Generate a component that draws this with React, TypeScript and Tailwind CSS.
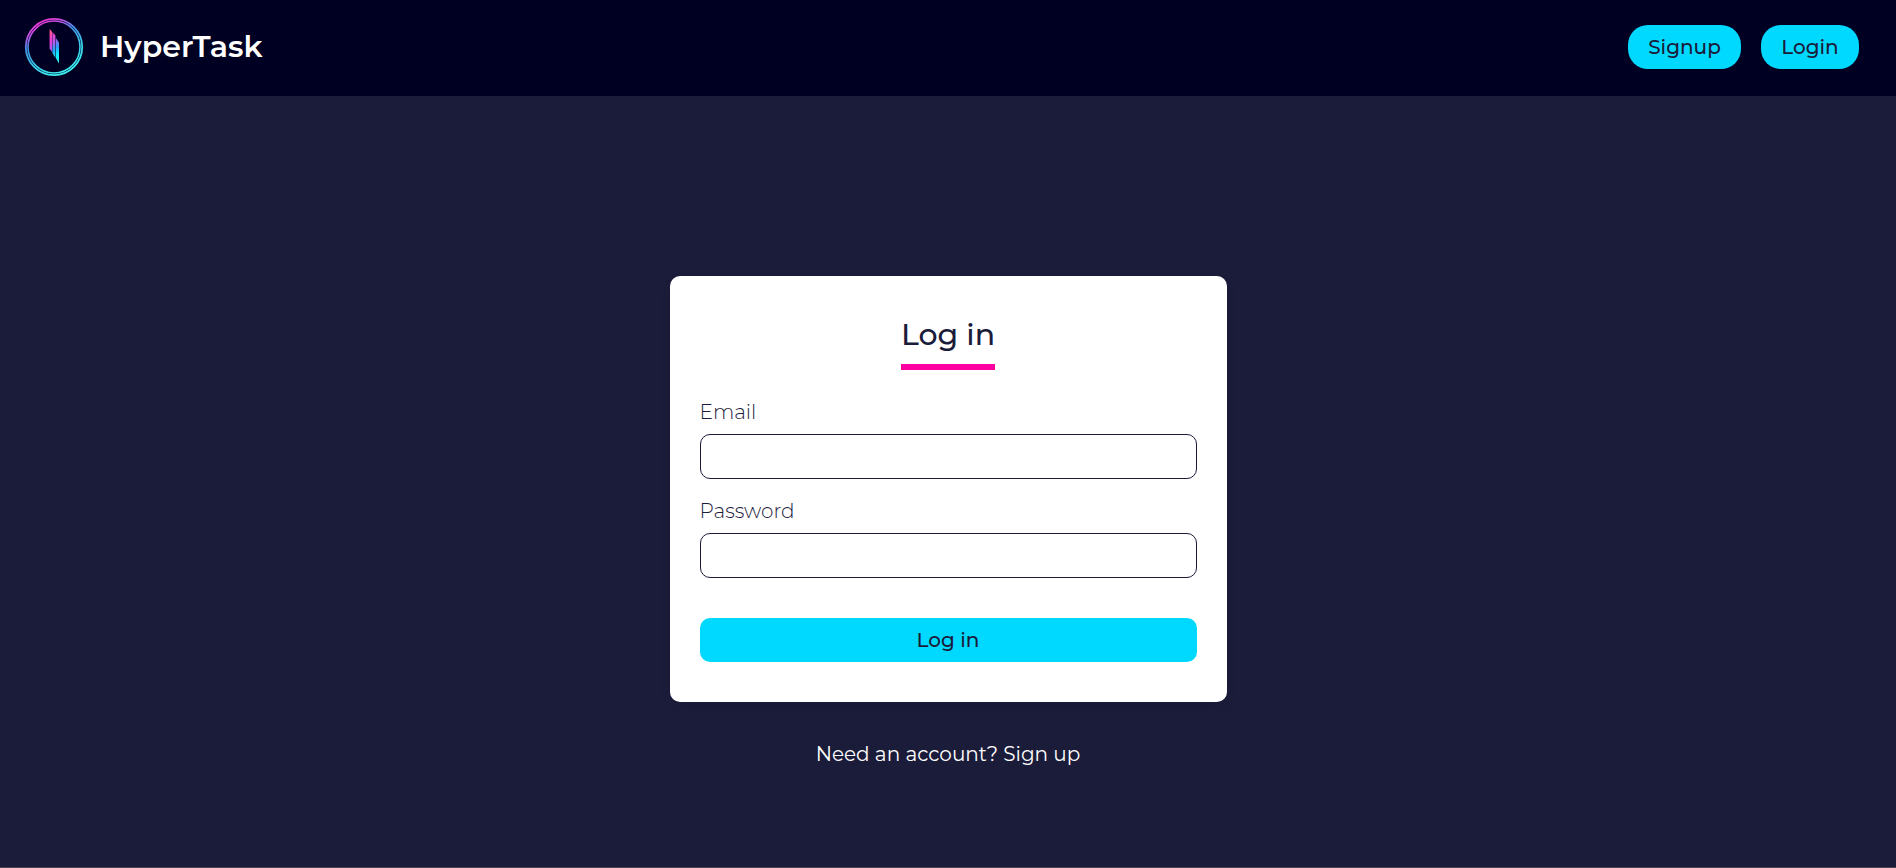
import React from "react";

function Logo() {
  return (
    <svg className="size-[60px]" viewBox="0 0 60 60" fill="none" aria-hidden="true">
      <defs>
        <linearGradient id="ring" x1="14" y1="4" x2="38" y2="56" gradientUnits="userSpaceOnUse">
          <stop offset="0" stopColor="#f433d2" />
          <stop offset="0.16" stopColor="#c050e0" />
          <stop offset="0.36" stopColor="#4292ea" />
          <stop offset="0.7" stopColor="#38cfe8" />
          <stop offset="1" stopColor="#3df0f0" />
        </linearGradient>
        <linearGradient id="barLeft" x1="0" y1="12" x2="0" y2="34" gradientUnits="userSpaceOnUse">
          <stop offset="0" stopColor="#ff5f7c" />
          <stop offset="0.5" stopColor="#f03fd8" />
          <stop offset="1" stopColor="#a35cf0" />
        </linearGradient>
        <linearGradient id="barMiddle" x1="0" y1="15" x2="0" y2="41" gradientUnits="userSpaceOnUse">
          <stop offset="0" stopColor="#ff3fc0" />
          <stop offset="0.4" stopColor="#b25cf0" />
          <stop offset="0.7" stopColor="#28a8f8" />
          <stop offset="1" stopColor="#12e8fa" />
        </linearGradient>
        <linearGradient id="barRight" x1="0" y1="21" x2="0" y2="46" gradientUnits="userSpaceOnUse">
          <stop offset="0" stopColor="#b05cf0" />
          <stop offset="0.35" stopColor="#2d9cf8" />
          <stop offset="0.65" stopColor="#0cecff" />
          <stop offset="1" stopColor="#2af5e6" />
        </linearGradient>
      </defs>
      <circle cx="30" cy="30" r="28.2" stroke="url(#ring)" strokeWidth="1.8" />
      <circle cx="30" cy="30" r="26" stroke="url(#ring)" strokeWidth="1.6" />
      <path d="M25.6 12L28 14.5V35L25.6 31.5Z" fill="url(#barLeft)" />
      <path d="M28.4 15L31.4 18.5V41L28.4 36Z" fill="url(#barMiddle)" />
      <path d="M31.9 21L35 25.5V46.5L31.9 41Z" fill="url(#barRight)" />
    </svg>
  );
}

const navButton =
  "h-11 rounded-[20px] bg-[#00d9ff] text-center text-xl leading-6 font-medium text-[#1b1b3a]";

function Header() {
  return (
    <header className="flex h-24 items-center justify-between bg-[#000022] pr-[37px] pb-0.5 pl-6">
      <a href="#home" className="flex items-center gap-4">
        <Logo />
        <span className="text-[30px] leading-9 font-semibold text-white">HyperTask</span>
      </a>
      <nav className="flex gap-5">
        <button type="button" className={`${navButton} w-[113px]`}>Signup</button>
        <button type="button" className={`${navButton} w-[98px]`}>Login</button>
      </nav>
    </header>
  );
}

function Field({ id, label, type }: { id: string; label: string; type: string }) {
  return (
    <div className="flex flex-col gap-2.5">
      <label htmlFor={id} className="text-xl leading-6 font-light">{label}</label>
      <input
        id={id}
        type={type}
        className="h-[45px] w-full rounded-[10px] border border-[#1b1b3a] bg-white px-3 text-xl outline-none"
      />
    </div>
  );
}

export default function App() {
  return (
    <div className="flex min-h-screen flex-col border-b border-[#4a4455] bg-[#1b1b3a] font-['Montserrat','Inter',sans-serif]">
      <Header />
      <main className="flex flex-col items-center gap-10 px-4 pt-[180px] pb-10">
        <form
          className="flex w-full max-w-[557px] flex-col rounded-[10px] bg-white px-[30px] py-10 text-[#1b1b3a] shadow-[0_4px_12px_rgba(0,0,0,0.05)]"
          onSubmit={(e) => e.preventDefault()}
        >
          <h1 className="mb-[30px] self-center border-b-[6px] border-[#ff00a0] pb-2.5 text-[30px] leading-[38px] font-medium">
            Log in
          </h1>
          <div className="flex flex-col gap-5">
            <Field id="email" label="Email" type="email" />
            <Field id="password" label="Password" type="password" />
          </div>
          <button
            type="submit"
            className="mt-10 h-11 rounded-[10px] bg-[#00d9ff] text-xl leading-6 font-medium"
          >
            Log in
          </button>
        </form>
        <a href="#signup" className="text-xl leading-6 text-white">Need an account? Sign up</a>
      </main>
    </div>
  );
}
